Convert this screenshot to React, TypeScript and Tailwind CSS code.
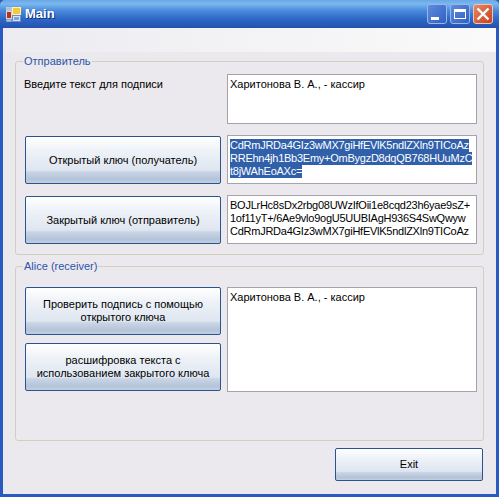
const font = "font-['Liberation_Sans',Arial,sans-serif]"

const WinButton = ({ label, className }: { label: string[]; className?: string }) => (
  <button
    className={`w-full rounded-[2px] border border-[#2a5490] bg-[linear-gradient(180deg,#ffffff_0%,#eef2f8_30%,#dfe6f0_72%,#c9d5e5_76%,#b4c3d9_92%,#c2cfe0_100%)] text-[11px] leading-[13px] text-black ${className ?? ''}`}
  >
    {label.map((l) => (
      <div key={l}>{l}</div>
    ))}
  </button>
)

const TextBox = ({ children, className }: { children: React.ReactNode; className?: string }) => (
  <div
    className={`overflow-hidden border border-[#a5a5a9] bg-white px-[2px] py-[3px] text-[11px] leading-[13px] whitespace-nowrap text-black ${className ?? ''}`}
  >
    {children}
  </div>
)

const AppIcon = () => (
  <svg width="15" height="15" viewBox="0 0 15 15">
    <rect x="0" y="0" width="15" height="15" fill="#5f8fd0" />
    <rect x="0.5" y="0.5" width="5" height="3" fill="#a9c0de" stroke="#d5e2f2" strokeWidth="0.6" />
    <rect x="0.5" y="4.5" width="5" height="7" fill="#b5322a" stroke="#e3d3c0" />
    <rect x="6.5" y="0.5" width="8" height="7" fill="#f5c93e" stroke="#fff2b0" />
    <rect x="7.5" y="9.5" width="6" height="4" fill="#7fa5d8" stroke="#d7e5f7" />
    <rect x="0.5" y="12.5" width="5" height="2" fill="#a9c0de" />
  </svg>
)

const App = () => (
  <div className={`flex h-[497px] w-[499px] flex-col bg-[#2a5ac0] ${font}`}>
    <div className="flex h-[28px] shrink-0 items-center rounded-t-[5px] bg-[linear-gradient(180deg,#6aa6ea_0%,#7ab8ec_14%,#4a8adc_38%,#2d68c4_68%,#2450ae_100%)] pr-[6px] pl-[6px]">
      <AppIcon />
      <span className="ml-[4px] text-[13px] font-bold text-white [text-shadow:1px_1px_0_#0f2f80]">Main</span>
      <div className="ml-auto flex gap-[3px]">
        <div className="relative h-[20px] w-[20px] rounded-[3px] border border-[#9ab6e6] bg-[linear-gradient(135deg,#5f8cde,#2f5fc6)]">
          <div className="absolute bottom-[3px] left-[3px] h-[3px] w-[8px] bg-white" />
        </div>
        <div className="h-[20px] w-[20px] rounded-[3px] border border-[#9ab6e6] bg-[linear-gradient(135deg,#5f8cde,#2f5fc6)] px-[3px] py-[4px]">
          <div className="h-full w-full border border-t-[3px] border-white" />
        </div>
        <div className="flex h-[20px] w-[20px] items-center justify-center rounded-[3px] border border-[#eec4b4] bg-[linear-gradient(135deg,#e58a64,#c8401c)]">
          <svg width="14" height="14" viewBox="0 0 14 14" stroke="white" strokeWidth="2.4">
            <path d="M1.5 1.5 L12.5 12.5 M12.5 1.5 L1.5 12.5" />
          </svg>
        </div>
      </div>
    </div>
    <div className="flex min-h-0 flex-1 px-[3px] pb-[3px]">
      <div className="flex flex-1 flex-col bg-[#ebe9ed]">
        <div className="h-[24px] shrink-0 bg-[linear-gradient(90deg,#ecebf0_0%,#fafafa_100%)]" />
        <div className="px-[12px] pt-[2px]">
          <fieldset className="h-[201px] rounded-[3px] border border-[#d0d0bf] pl-[9px]">
            <legend className="ml-[-2px] px-[1px] text-[11px] leading-[14px] text-[#2b55a8]">Отправитель</legend>
            <div className="grid grid-cols-[196px_250px] gap-x-[6px] pt-[6px]">
              <div className="-ml-[1px] pt-[3px] text-[11px] leading-[14px] text-black">Введите текст для подписи</div>
              <TextBox className="h-[50px]">Харитонова В. А., - кассир</TextBox>
            </div>
            <div className="mt-[11px] grid grid-cols-[196px_250px] grid-rows-[49px_49px] gap-x-[6px] gap-y-[11px]">
              <WinButton className="h-[48px] self-end" label={['Открытый ключ (получатель)']} />
              <TextBox className="tracking-[-0.25px]">
                <div className="w-fit bg-[#3160ab] text-white">CdRmJRDa4GIz3wMX7giHfEVlK5ndlZXln9TICoAz</div>
                <div className="w-fit bg-[#3160ab] text-white">RREhn4jh1Bb3Emy+OmBygzD8dqQB768HUuMzC</div>
                <div className="w-fit bg-[#3160ab] text-white">t8jWAhEoAXc=</div>
              </TextBox>
              <WinButton className="h-[48px] self-end" label={['Закрытый ключ (отправитель)']} />
              <TextBox className="tracking-[-0.25px]">
                BOJLrHc8sDx2rbg08UWzIfOii1e8cqd23h6yae9sZ+
                <br />
                1of11yT+/6Ae9vlo9ogU5UUBIAgH936S4SwQwyw
                <br />
                CdRmJRDa4GIz3wMX7giHfEVlK5ndlZXln9TICoAz
              </TextBox>
            </div>
          </fieldset>
          <fieldset className="mt-[4px] h-[182px] rounded-[3px] border border-[#d0d0bf] pl-[9px]">
            <legend className="ml-[-2px] px-[1px] text-[11px] leading-[14px] text-[#2b55a8]">Alice (receiver)</legend>
            <div className="grid grid-cols-[196px_250px] items-start gap-x-[6px] pt-[14px]">
              <div className="flex h-[104px] flex-col gap-[8px]">
                <WinButton className="h-[48px]" label={['Проверить подпись с помощью', 'открытого ключа']} />
                <WinButton className="h-[48px]" label={['расшифровка текста с', 'использованием закрытого ключа']} />
              </div>
              <TextBox className="h-[105px]">Харитонова В. А., - кассир</TextBox>
            </div>
          </fieldset>
          <div className="mt-[7px] flex justify-end pr-[1px]">
            <WinButton className="h-[33px] !w-[148px]" label={['Exit']} />
          </div>
        </div>
      </div>
    </div>
  </div>
)

export default App
